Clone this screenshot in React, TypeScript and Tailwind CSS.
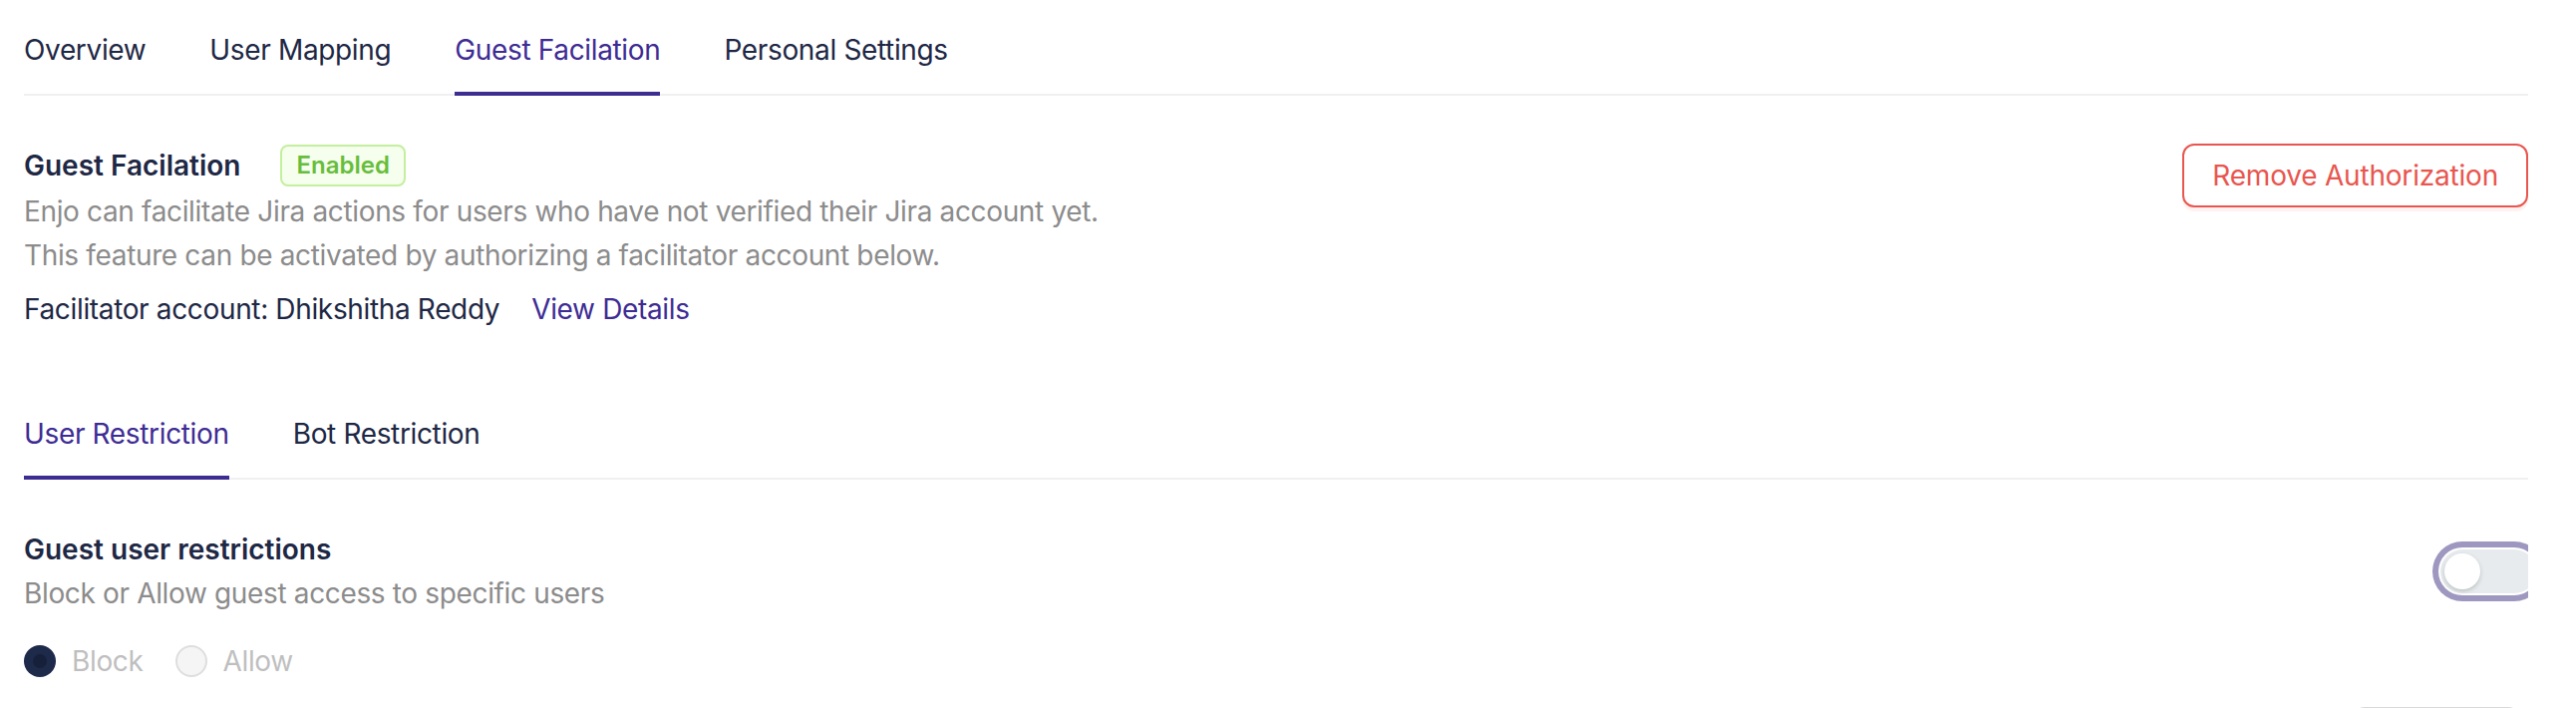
import { useState } from "react"

const font = { fontFamily: "Inter, 'Noto Sans', 'Liberation Sans', sans-serif" }

interface TabsProps {
  items: string[]
  active: number
  onChange: (i: number) => void
}

function Tabs({ items, active, onChange }: TabsProps) {
  return (
    <div className="flex gap-[64px] border-b-2 border-[#f0f0f0]">
      {items.map((label, i) => (
        <button
          key={label}
          onClick={() => onChange(i)}
          className={`relative pt-[24px] pb-[22px] text-[28px] leading-[44px] tracking-[-0.35px] ${
            i === active ? "text-[#3e2c94]" : "text-[#1e2845]"
          }`}
        >
          {label}
          {i === active && <span className="absolute left-0 right-0 -bottom-[2px] h-[4px] bg-[#3d2d91]" />}
        </button>
      ))}
    </div>
  )
}

function Radio({ label, checked }: { label: string; checked: boolean }) {
  return (
    <label className="flex items-center mr-[16px]">
      {checked ? (
        <span className="w-[32px] h-[32px] rounded-full bg-[#1e2a4a] flex items-center justify-center">
          <span className="w-[14px] h-[14px] rounded-full bg-[#17203a]" />
        </span>
      ) : (
        <span className="w-[32px] h-[32px] rounded-full bg-[#f5f5f5] border-2 border-[#dedede]" />
      )}
      <span className="px-[16px] text-[28px] leading-[44px] tracking-[-0.35px] text-[#bfbfbf]">{label}</span>
    </label>
  )
}

export default function App() {
  const [mainTab, setMainTab] = useState(2)
  const [subTab, setSubTab] = useState(0)

  return (
    <div className="w-full h-[710px] overflow-hidden bg-white pl-[24px] pr-[48px]" style={font}>
      <div className="mt-[4px]">
        <Tabs
          items={["Overview", "User Mapping", "Guest Facilation", "Personal Settings"]}
          active={mainTab}
          onChange={setMainTab}
        />
      </div>

      <div className="mt-[48px] flex items-start justify-between">
        <div>
          <div className="flex items-center">
            <h3 className="text-[28px] leading-[44px] font-semibold text-[#1e2845]">Guest Facilation</h3>
            <span className="ml-[40px] h-[42px] px-[14px] flex items-center rounded-[8px] border-2 border-[#c3ef9f] bg-[#f6ffed] text-[24px] font-semibold text-[#67bd3c]">
              Enabled
            </span>
          </div>
          <p className="mt-[2px] text-[28px] leading-[44px] tracking-[-0.35px] text-[#8c8c8c]">
            Enjo can facilitate Jira actions for users who have not verified their Jira account yet.
            <br />
            This feature can be activated by authorizing a facilitator account below.
          </p>
          <div className="mt-[10px] flex items-center text-[28px] leading-[44px] tracking-[-0.35px]">
            <span className="text-[#1e2845]">Facilitator account: Dhikshitha Reddy</span>
            <a className="ml-[32px] text-[#3e2c94] cursor-pointer">View Details</a>
          </div>
        </div>
        <button className="h-[64px] px-[28px] rounded-[12px] border-2 border-[#e8564f] bg-white text-[28px] tracking-[-0.2px] text-[#e8564f] shadow-[0_4px_0_rgba(255,38,5,0.06)]">
          Remove Authorization
        </button>
      </div>

      <div className="mt-[57px]">
        <Tabs items={["User Restriction", "Bot Restriction"]} active={subTab} onChange={setSubTab} />
      </div>

      <div className="mt-[48px] flex items-center justify-between overflow-hidden">
        <div>
          <h4 className="text-[28px] leading-[44px] font-semibold text-[#1e2845]">Guest user restrictions</h4>
          <p className="text-[28px] leading-[44px] tracking-[-0.35px] text-[#8c8c8c]">
            Block or Allow guest access to specific users
          </p>
        </div>
        <div className="-mr-[16px] w-[112px] h-[60px] rounded-full bg-[#9e97bf] p-[6px]">
          <div className="w-full h-full rounded-full bg-white p-[2px]">
            <div className="w-full h-full rounded-full bg-[#e8ebee] flex items-center pl-[4px]">
              <span className="w-[36px] h-[36px] rounded-full bg-white shadow-[0_2px_4px_rgba(0,35,11,0.2)]" />
            </div>
          </div>
        </div>
      </div>

      <div className="mt-[24px] flex items-center">
        <Radio label="Block" checked />
        <Radio label="Allow" checked={false} />
      </div>

      <div className="mt-[24px] flex justify-end pr-[8px]">
        <div className="w-[168px] h-[64px] rounded-[12px] border-2 border-[#d9d9d9]" />
      </div>
    </div>
  )
}
